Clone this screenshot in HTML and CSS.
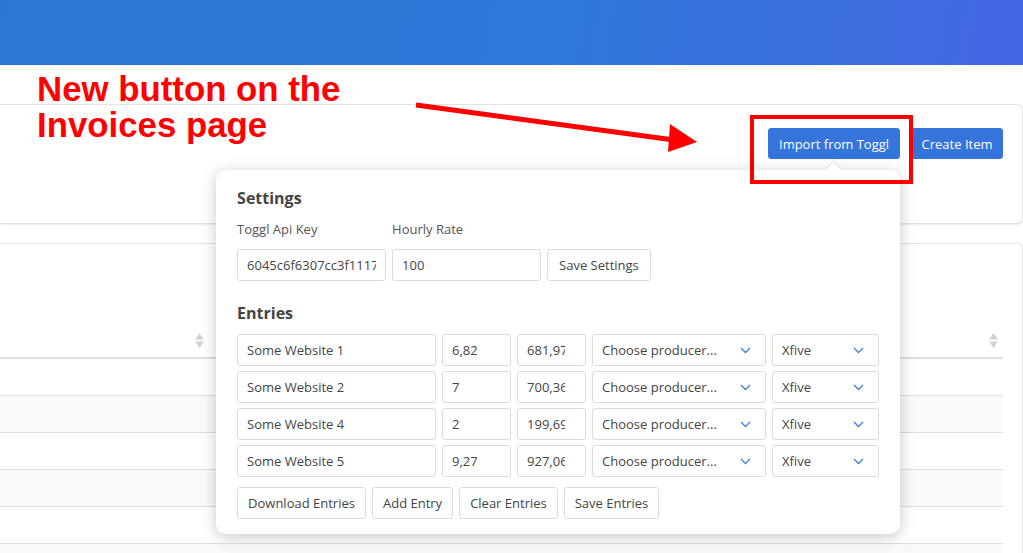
FILE: index.html
```html
<!DOCTYPE html>
<html lang="en">
<head>
<meta charset="utf-8">
<title>Invoices</title>
<link rel="stylesheet" href="styles.css">
</head>
<body>
<header class="topbar"></header>
<main class="page">
  <section class="card toolbar-card">
    <div class="toolbar">
      <div class="toggl">
        <button class="btn btn-primary">Import from Toggl</button>
        <div class="popover">
          <h3 class="pop-title">Settings</h3>
          <div class="settings-grid">
            <label class="field-label">Toggl Api Key</label>
            <label class="field-label">Hourly Rate</label>
            <span></span>
            <input class="input" value="6045c6f6307cc3f1117a9b2e4d">
            <input class="input" value="100">
            <button class="btn btn-light">Save Settings</button>
          </div>
          <h3 class="pop-title entries-title">Entries</h3>
          <div class="entries">
            <div class="entry">
              <input class="input" value="Some Website 1">
              <input class="input" value="6,82">
              <input class="input input-num" value="681,97">
              <div class="select"><span>Choose producer...</span><svg width="11" height="7" viewBox="0 0 11 7"><path d="M1 1l4.5 4.5L10 1" fill="none" stroke="#3f7fdc" stroke-width="1.3"/></svg></div>
              <div class="select"><span>Xfive</span><svg width="11" height="7" viewBox="0 0 11 7"><path d="M1 1l4.5 4.5L10 1" fill="none" stroke="#3f7fdc" stroke-width="1.3"/></svg></div>
            </div>
            <div class="entry">
              <input class="input" value="Some Website 2">
              <input class="input" value="7">
              <input class="input input-num" value="700,36">
              <div class="select"><span>Choose producer...</span><svg width="11" height="7" viewBox="0 0 11 7"><path d="M1 1l4.5 4.5L10 1" fill="none" stroke="#3f7fdc" stroke-width="1.3"/></svg></div>
              <div class="select"><span>Xfive</span><svg width="11" height="7" viewBox="0 0 11 7"><path d="M1 1l4.5 4.5L10 1" fill="none" stroke="#3f7fdc" stroke-width="1.3"/></svg></div>
            </div>
            <div class="entry">
              <input class="input" value="Some Website 4">
              <input class="input" value="2">
              <input class="input input-num" value="199,69">
              <div class="select"><span>Choose producer...</span><svg width="11" height="7" viewBox="0 0 11 7"><path d="M1 1l4.5 4.5L10 1" fill="none" stroke="#3f7fdc" stroke-width="1.3"/></svg></div>
              <div class="select"><span>Xfive</span><svg width="11" height="7" viewBox="0 0 11 7"><path d="M1 1l4.5 4.5L10 1" fill="none" stroke="#3f7fdc" stroke-width="1.3"/></svg></div>
            </div>
            <div class="entry">
              <input class="input" value="Some Website 5">
              <input class="input" value="9,27">
              <input class="input input-num" value="927,06">
              <div class="select"><span>Choose producer...</span><svg width="11" height="7" viewBox="0 0 11 7"><path d="M1 1l4.5 4.5L10 1" fill="none" stroke="#3f7fdc" stroke-width="1.3"/></svg></div>
              <div class="select"><span>Xfive</span><svg width="11" height="7" viewBox="0 0 11 7"><path d="M1 1l4.5 4.5L10 1" fill="none" stroke="#3f7fdc" stroke-width="1.3"/></svg></div>
            </div>
          </div>
          <div class="entry-actions">
            <button class="btn btn-light">Download Entries</button>
            <button class="btn btn-light">Add Entry</button>
            <button class="btn btn-light">Clear Entries</button>
            <button class="btn btn-light">Save Entries</button>
          </div>
        </div>
      </div>
      <button class="btn btn-primary btn-create">Create Item</button>
    </div>
  </section>
  <section class="card table-card">
    <table class="data-table">
      <thead>
        <tr>
          <th class="col-a"><svg class="sort" width="9" height="15" viewBox="0 0 9 15"><path d="M4.5 0L9 6.5H0z M4.5 15L0 8.5h9z" fill="#d2d2d2"/></svg></th>
          <th class="col-b"><svg class="sort" width="9" height="15" viewBox="0 0 9 15"><path d="M4.5 0L9 6.5H0z M4.5 15L0 8.5h9z" fill="#d2d2d2"/></svg></th>
        </tr>
      </thead>
      <tbody>
        <tr><td></td><td></td></tr>
        <tr><td></td><td></td></tr>
        <tr><td></td><td></td></tr>
        <tr><td></td><td></td></tr>
        <tr><td></td><td></td></tr>
        <tr><td></td><td></td></tr>
      </tbody>
    </table>
  </section>
</main>
<div class="annotation">New button on the<br>Invoices page</div>
<svg class="arrow" width="295" height="65" viewBox="0 0 295 65">
  <line x1="6" y1="10" x2="264" y2="45" stroke="#ff0000" stroke-width="5"/>
  <polygon points="260,29 287,47 258,57" fill="#ff0000"/>
</svg>
<div class="highlight"></div>
</body>
</html>
```

FILE: styles.css
```css
* { box-sizing: border-box; }

html, body { margin: 0; padding: 0; }

body {
  position: relative;
  width: 1023px;
  height: 553px;
  overflow: hidden;
  background: #fff;
  color: #444;
  font-family: "Open Sans", "Noto Sans", Arial, sans-serif;
  font-size: 13px;
}

.topbar {
  height: 65px;
  background: linear-gradient(100deg, #2a77d3 0%, #2f77d9 55%, #4366e1 100%);
}

.page { padding-top: 39px; }

.card {
  background: #fff;
  border: 1px solid #e3e3e3;
  border-left: 0;
  border-radius: 0 6px 6px 0;
  box-shadow: 0 1px 2px rgba(0, 0, 0, 0.08);
}

.toolbar-card {
  height: 120px;
  padding: 23px 19px 0 0;
}

.toolbar {
  display: flex;
  justify-content: flex-end;
  gap: 11px;
}

.toggl { position: relative; }

.btn {
  height: 31px;
  padding: 0 10px;
  font: inherit;
  border-radius: 3px;
  white-space: nowrap;
  cursor: pointer;
}

.btn-primary {
  background: #3474db;
  border: 1px solid #3474db;
  color: #fff;
}

.btn-create { padding: 0 9.5px; }

.btn-light {
  height: 32px;
  padding: 0 10px;
  background: #fff;
  border: 1px solid #dcdcdc;
  color: #444;
}

.popover {
  position: absolute;
  top: calc(100% + 11px);
  right: 0;
  z-index: 5;
  width: 684px;
  padding: 17px 22px 15px 21px;
  background: #fff;
  border-radius: 10px;
  box-shadow: 0 3px 16px rgba(0, 0, 0, 0.22);
  text-align: left;
}

.popover::before {
  content: "";
  position: absolute;
  top: -5px;
  right: 61px;
  width: 11px;
  height: 11px;
  background: #fff;
  transform: rotate(45deg);
  box-shadow: -2px -2px 3px rgba(0, 0, 0, 0.05);
}

.pop-title {
  margin: 0;
  font-size: 16px;
  font-weight: 700;
  line-height: 22px;
  color: #444;
}

.settings-grid {
  display: grid;
  grid-template-columns: 149px 149px auto;
  column-gap: 6px;
  row-gap: 11px;
  justify-items: start;
  margin-top: 11px;
}

.settings-grid .btn-light { padding: 0 11px; }

.field-label {
  line-height: 18px;
  color: #555;
}

.input {
  width: 100%;
  height: 32px;
  padding: 0 9px;
  border: 1px solid #dcdcdc;
  border-radius: 3px;
  background: #fff;
  color: #444;
  font: inherit;
  outline: none;
}

.input-num { padding-right: 20px; }

.entries-title { margin-top: 21px; }

.entries {
  display: flex;
  flex-direction: column;
  gap: 5px;
  margin-top: 10px;
}

.entry {
  display: grid;
  grid-template-columns: 199px 69px 69px 174px 107px;
  column-gap: 6px;
}

.select {
  display: flex;
  align-items: center;
  justify-content: space-between;
  height: 32px;
  padding: 0 14px 0 9px;
  border: 1px solid #dcdcdc;
  border-radius: 3px;
  color: #444;
  white-space: nowrap;
}

.select svg { display: block; }

.entry-actions {
  display: flex;
  gap: 6px;
  margin-top: 10px;
}

.table-card {
  margin-top: 19px;
  height: 400px;
  padding: 0 19px 0 0;
}

.data-table {
  width: 100%;
  border-collapse: separate;
  border-spacing: 0;
}

.data-table th {
  height: 115px;
  padding: 0 5px 9px 0;
  vertical-align: bottom;
  border-bottom: 2px solid #dedede;
}

.data-table .col-a { width: 209px; }

.sort { display: block; margin-left: auto; }

.data-table td {
  height: 37px;
  padding: 0;
  border-bottom: 1px solid #dedede;
}

.data-table tbody tr:nth-child(even) td { background: #f9f9f9; }

.annotation {
  position: absolute;
  left: 37px;
  top: 71px;
  z-index: 10;
  color: #ff0000;
  font-family: "Liberation Sans", Arial, sans-serif;
  font-weight: 700;
  font-size: 34.8px;
  line-height: 36px;
  white-space: nowrap;
}

.arrow {
  position: absolute;
  left: 410px;
  top: 95px;
  z-index: 10;
}

.highlight {
  position: absolute;
  left: 750px;
  top: 115px;
  z-index: 10;
  width: 163px;
  height: 69px;
  border: 4px solid #ff0000;
}
```
